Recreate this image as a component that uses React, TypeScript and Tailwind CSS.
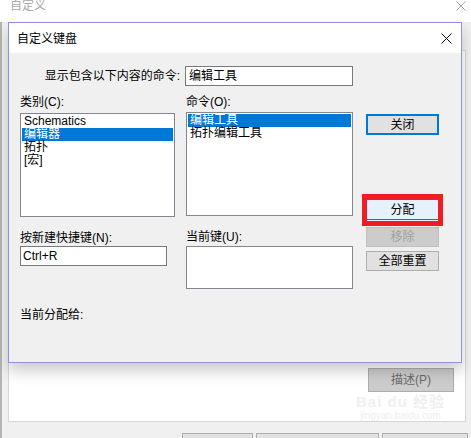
const font = "font-['Liberation_Sans','Noto_Sans_CJK_SC',sans-serif]";

function CloseX({ color = "#000", size = 11 }: { color?: string; size?: number }) {
  return (
    <svg width={size} height={size} viewBox="0 0 11 11">
      <path d="M0.5 0.5 L10.5 10.5 M10.5 0.5 L0.5 10.5" stroke={color} strokeWidth="1" />
    </svg>
  );
}

function ListBox({
  items,
  selected,
  className,
}: {
  items: string[];
  selected?: number;
  className: string;
}) {
  return (
    <div className={`border border-[#828790] bg-white p-[1px] ${className}`}>
      {items.map((it, i) => (
        <div
          key={it}
          className={`h-[13px] pl-[2px] text-[12px] leading-[13px] whitespace-nowrap ${
            i === selected ? "bg-[#0078d7] text-white" : "text-black"
          }`}
        >
          {it}
        </div>
      ))}
    </div>
  );
}

function Dialog() {
  return (
    <div className="absolute left-[8px] top-[22px] flex h-[341px] w-[454px] flex-col border border-[#9191e2] bg-[#f0f0f0] shadow-[0_8px_14px_rgba(0,0,0,0.2)]">
      {/* title bar */}
      <div className="flex h-[30px] shrink-0 items-center justify-between bg-white pl-[8px] pr-[9px]">
        <span className="pt-[2px] text-[12px] text-black">自定义键盘</span>
        <CloseX />
      </div>

      {/* filter row */}
      <div className="mt-[13px] flex items-center pl-[11px]">
        <span className="w-[160px] text-right text-[12px] leading-[14px]">显示包含以下内容的命令:</span>
        <div className="ml-[5px] flex h-[20px] w-[168px] items-center border border-[#7a7a7a] bg-white pl-[3px] text-[12px]">
          编辑工具
        </div>
      </div>

      {/* columns */}
      <div className="flex pl-[11px] text-[12px] leading-[14px]">
        <div className="flex w-[155px] flex-col">
          <span className="mt-[9px] h-[14px]">类别(C):</span>
          <ListBox
            className="mt-[4px] h-[104px]"
            items={["Schematics", "编辑器", "拓扑", "[宏]"]}
            selected={1}
          />
          <span className="mt-[14px] h-[14px]">按新建快捷键(N):</span>
          <div className="mt-[1px] flex h-[20px] w-[147px] items-center border border-[#7a7a7a] bg-white pl-[2px]">
            Ctrl+R
          </div>
          <span className="mt-[42px] h-[14px]">当前分配给:</span>
        </div>

        <div className="ml-[11px] flex w-[167px] flex-col">
          <span className="mt-[9px] h-[14px]">命令(O):</span>
          <ListBox
            className="mt-[3px] h-[104px]"
            items={["编辑工具", "拓扑编辑工具"]}
            selected={0}
          />
          <span className="mt-[14px] h-[14px]">当前键(U):</span>
          <div className="mt-[2px] h-[43px] border border-[#828790] bg-white" />
        </div>

        <div className="ml-[13px] flex w-[73px] flex-col">
          <button className="mt-[28px] flex h-[21px] items-center justify-center border-2 border-[#0078d7] bg-[#e1e1e1] text-[12px] text-black">
            关闭
          </button>
          <div className="-mx-[4px] mt-[59px] h-[32px] w-[81px] border-[5px] border-[#ee1c25]">
            <div className="flex h-full flex-col bg-[#e5f1fb]">
              <div className="h-[1px] bg-[#0078d7]" />
              <div className="flex flex-1 items-center justify-center text-[12px] text-black">分配</div>
              <div className="mb-[1px] h-[1px] bg-[#0078d7]" />
            </div>
          </div>
          <button className="mt-[1px] flex h-[20px] items-center justify-center border border-[#bfbfbf] bg-[#cccccc] text-[12px] text-[#a0a0a0]">
            移除
          </button>
          <button className="mt-[4px] flex h-[20px] items-center justify-center border border-[#adadad] bg-[#e1e1e1] text-[12px] text-black">
            全部重置
          </button>
        </div>
      </div>
    </div>
  );
}

export default function App() {
  return (
    <div className={`relative h-[438px] w-[471px] overflow-hidden bg-[#f0f0f0] ${font}`}>
      {/* back window */}
      <div className="flex h-full flex-col">
        <div className="flex h-[22px] shrink-0 items-start justify-between bg-white pl-[10px] pr-[5px]">
          <span className="text-[12px] leading-[13px] text-[#a8a8a8]">自定义</span>
          <div className="mt-[1px]">
            <CloseX color="#9a9a9a" size={10} />
          </div>
        </div>
        <div className="flex flex-1">
          <div className="w-[2px] bg-[#b4b4b4]" />
          <div className="flex flex-1 flex-col">
            <div className="ml-[6px] mt-[28px] flex h-[372px] w-[458px] flex-col items-end border border-[#d6d6d6] bg-white">
              <button className="mr-[11px] mt-[317px] flex h-[26px] w-[86px] items-center justify-center border border-[#adadad] bg-[#cccccc] text-[12px] text-[#6a6a6a]">
                描述(P)
              </button>
              <div className="mr-[20px] mt-[2px] flex flex-col items-center leading-none text-[#efefef]">
                <span className="text-[15px] font-bold tracking-[1px]">Bai du 经验</span>
                <span className="mt-[2px] text-[10px]">jingyan.baidu.com</span>
              </div>
            </div>
            <div className="ml-[180px] mt-[11px] flex gap-[3px]">
              <div className="h-[10px] w-[71px] border border-[#adadad] bg-[#e1e1e1]" />
              <div className="h-[10px] w-[123px] border border-[#adadad] bg-[#e1e1e1]" />
              <div className="h-[10px] w-[86px] border border-[#adadad] bg-[#e1e1e1]" />
            </div>
          </div>
        </div>
      </div>

      <Dialog />
    </div>
  );
}
